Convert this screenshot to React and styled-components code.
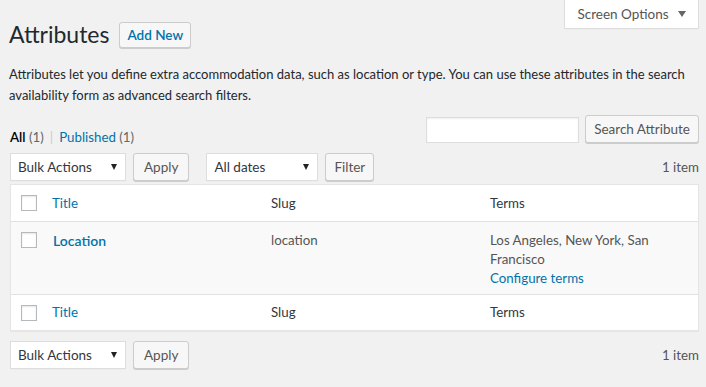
import React from "react";
import styled, { createGlobalStyle } from "styled-components";

const Global = createGlobalStyle`
  body {
    margin: 0;
    background: #f1f1f1;
    font-family: Lato, "Noto Sans", sans-serif;
    font-size: 13px;
    color: #444;
  }
`;

const Page = styled.div`
  position: relative;
  width: 706px;
  height: 387px;
  overflow: hidden;
  padding: 0 7px 0 10px;
  box-sizing: border-box;
`;

const ScreenTab = styled.button`
  position: absolute;
  top: 0;
  right: 7px;
  width: 135px;
  height: 29px;
  background: #fff;
  border: 1px solid #ddd;
  border-top: none;
  box-shadow: 0 1px 1px -1px rgba(0, 0, 0, 0.1);
  font: inherit;
  font-size: 13.5px;
  color: #555;
  display: flex;
  align-items: center;
  justify-content: center;
  gap: 9px;
  padding: 0 0 1px;
  &::after {
    content: "";
    border-left: 4px solid transparent;
    border-right: 4px solid transparent;
    border-top: 6px solid #666;
  }
`;

const Header = styled.div`
  display: flex;
  align-items: center;
  gap: 10px;
  padding-top: 20px;
  margin-left: -1px;
`;

const Heading = styled.h1`
  margin: 0;
  font-size: 23px;
  font-weight: 400;
  color: #23282d;
  line-height: 29px;
`;

const Button = styled.button`
  height: ${(p) => p.$h || 28}px;
  padding: 0 ${(p) => p.$px || 10}px;
  background: #f7f7f7;
  border: 1px solid #ccc;
  border-radius: 3px;
  box-shadow: 0 1px 0 #ccc;
  font: inherit;
  font-size: 13.5px;
  color: ${(p) => (p.$primary ? "#0073aa" : "#555")};
  font-weight: ${(p) => (p.$primary ? 600 : 400)};
  white-space: nowrap;
  box-sizing: border-box;
`;

const Desc = styled.p`
  margin: 15px -7px 0 -1px;
  line-height: 21px;
  font-size: 13px;
  color: #23282d;
`;

const Row = styled.div`
  display: flex;
  align-items: ${(p) => p.$align || "center"};
  justify-content: space-between;
  margin-top: ${(p) => p.$mt || 0}px;
`;

const Group = styled.div`
  display: flex;
  align-items: center;
  gap: ${(p) => p.$gap || 7}px;
`;

const Views = styled.div`
  color: #666;
  padding-top: 14px;
  font-size: 13.3px;
  b {
    color: #000;
    font-weight: 600;
  }
  a {
    color: #0073aa;
  }
  .sep {
    color: #ccc;
    margin: 0 6px;
  }
`;

const SearchInput = styled.div`
  width: 153px;
  height: 26px;
  margin-top: 1px;
  background: #fff;
  border: 1px solid #ddd;
  box-shadow: inset 0 1px 2px rgba(0, 0, 0, 0.07);
  box-sizing: border-box;
`;

const Select = styled.div`
  width: ${(p) => p.$w}px;
  height: 28px;
  background: #fff;
  border: 1px solid #ddd;
  box-shadow: 0 1px 1px -1px rgba(0, 0, 0, 0.1);
  box-sizing: border-box;
  display: flex;
  align-items: center;
  justify-content: space-between;
  padding: 0 8px 0 7px;
  color: #32373c;
  font-size: 13.5px;
  margin-left: ${(p) => p.$ml || 0}px;
  &::after {
    content: "";
    border-left: 3px solid transparent;
    border-right: 3px solid transparent;
    border-top: 6px solid #222;
  }
`;

const Count = styled.span`
  color: #555;
  font-size: 13.3px;
`;

const Table = styled.div`
  background: #fff;
  border: 1px solid #e5e5e5;
  box-shadow: 0 1px 1px rgba(0, 0, 0, 0.04);
  margin-top: 3px;
`;

const TRow = styled.div`
  display: grid;
  grid-template-columns: 41px 219px 219px 1fr;
  align-items: ${(p) => (p.$head ? "center" : "start")};
  height: ${(p) => p.$h}px;
  padding-top: ${(p) => (p.$head ? 0 : 9)}px;
  box-sizing: border-box;
  background: ${(p) => (p.$alt ? "#f9f9f9" : "#fff")};
  border-top: ${(p) => (p.$top ? "1px solid #e1e1e1" : "none")};
  color: #32373c;
  font-size: 13.3px;
  line-height: 19px;
`;

const Check = styled.span`
  display: block;
  width: 16px;
  height: 16px;
  margin-left: 10px;
  border: 1px solid #b4b9be;
  background: #fff;
  box-shadow: inset 0 1px 2px rgba(0, 0, 0, 0.1);
  box-sizing: border-box;
  margin-top: ${(p) => p.$mt || 0}px;
`;

const ColLink = styled.span`
  color: #0073aa;
  font-weight: ${(p) => (p.$bold ? 600 : 400)};
  font-size: ${(p) => (p.$bold ? 14 : 13.3)}px;
  padding-left: ${(p) => (p.$bold ? 1 : 0)}px;
`;

const Cell = styled.div`
  color: #555;
  a {
    display: block;
    color: #0073aa;
  }
`;

export default function App() {
  return (
    <>
      <Global />
      <Page>
        <ScreenTab>Screen Options</ScreenTab>
        <Header>
          <Heading>Attributes</Heading>
          <Button $primary $h={26} $px={7}>Add New</Button>
        </Header>
        <Desc>
          Attributes let you define extra accommodation data, such as location or type. You can use these attributes in the search availability form as advanced search filters.
        </Desc>
        <Row $mt={9} $align="flex-start">
          <Views>
            <b>All</b> (1)<span className="sep">|</span><a>Published</a> (1)
          </Views>
          <Group $gap={6}>
            <SearchInput />
            <Button $px={8}>Search Attribute</Button>
          </Group>
        </Row>
        <Row $mt={8}>
          <Group>
            <Select $w={116}>Bulk Actions</Select>
            <Button $px={10}>Apply</Button>
            <Select $w={112} $ml={10}>All dates</Select>
            <Button $px={8}>Filter</Button>
          </Group>
          <Count>1 item</Count>
        </Row>
        <Table>
          <TRow $head $h={36}>
            <Check />
            <ColLink>Title</ColLink>
            <span>Slug</span>
            <span>Terms</span>
          </TRow>
          <TRow $alt $top $h={73}>
            <Check $mt={1} />
            <ColLink $bold>Location</ColLink>
            <Cell>location</Cell>
            <Cell>
              Los Angeles, New York, San Francisco
              <a>Configure terms</a>
            </Cell>
          </TRow>
          <TRow $head $top $h={36}>
            <Check />
            <ColLink>Title</ColLink>
            <span>Slug</span>
            <span>Terms</span>
          </TRow>
        </Table>
        <Row $mt={10}>
          <Group>
            <Select $w={116}>Bulk Actions</Select>
            <Button $px={10}>Apply</Button>
          </Group>
          <Count>1 item</Count>
        </Row>
      </Page>
    </>
  );
}
